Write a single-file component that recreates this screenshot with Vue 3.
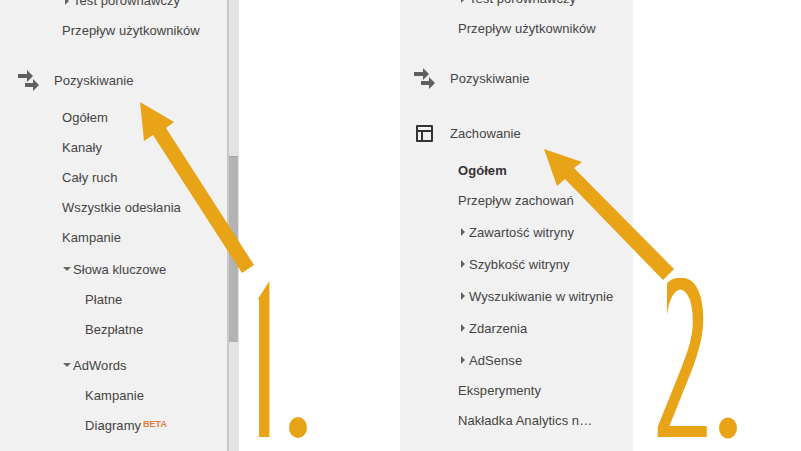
<script setup>
const leftRows = [
  { text: 'Test porównawczy', type: 'sub', open: false, cls: 'first' },
  { text: 'Przepływ użytkowników', type: 'item' },
  { text: 'Pozyskiwanie', type: 'head', icon: 'arrows', cls: 'gap-head' },
  { text: 'Ogółem', type: 'item', cls: 'gap-first' },
  { text: 'Kanały', type: 'item' },
  { text: 'Cały ruch', type: 'item' },
  { text: 'Wszystkie odesłania', type: 'item' },
  { text: 'Kampanie', type: 'item' },
  { text: 'Słowa kluczowe', type: 'sub', open: true, cls: 'gap-1' },
  { text: 'Płatne', type: 'leaf', cls: 'pull-1' },
  { text: 'Bezpłatne', type: 'leaf' },
  { text: 'AdWords', type: 'sub', open: true, cls: 'gap-5' },
  { text: 'Kampanie', type: 'leaf', cls: 'pull-1' },
  { text: 'Diagramy', type: 'leaf', beta: true }
]
const rightRows = [
  { text: 'Test porównawczy', type: 'sub', open: false, cls: 'first' },
  { text: 'Przepływ użytkowników', type: 'item' },
  { text: 'Pozyskiwanie', type: 'head', icon: 'arrows', cls: 'gap-head' },
  { text: 'Zachowanie', type: 'head', icon: 'layout', cls: 'gap-head2' },
  { text: 'Ogółem', type: 'item', cls: 'gap-first strong' },
  { text: 'Przepływ zachowań', type: 'item' },
  { text: 'Zawartość witryny', type: 'sub', open: false, cls: 'gap-1' },
  { text: 'Szybkość witryny', type: 'sub', open: false },
  { text: 'Wyszukiwanie w witrynie', type: 'sub', open: false },
  { text: 'Zdarzenia', type: 'sub', open: false },
  { text: 'AdSense', type: 'sub', open: false },
  { text: 'Eksperymenty', type: 'item', cls: 'pull-1' },
  { text: 'Nakładka Analytics n…', type: 'item' }
]
const panels = [
  { id: 'left', rows: leftRows },
  { id: 'right', rows: rightRows }
]
</script>

<template>
  <div class="page">
    <section v-for="panel in panels" :key="panel.id" class="panel" :class="panel.id">
      <nav class="nav">
        <div v-for="(row, i) in panel.rows" :key="i" class="row" :class="[row.type, row.cls]">
          <span v-if="row.icon" class="icon-slot">
            <svg v-if="row.icon === 'arrows'" width="21" height="21" viewBox="0 0 21 21">
              <path fill="#5f5f5f" d="M0 4h9V0l6 6-6 6V8H0zM7 13h8V9l6 6-6 6v-4H7z" />
            </svg>
            <svg v-else width="21" height="21" viewBox="0 0 21 21">
              <path fill="none" stroke="#333" stroke-width="2" stroke-linejoin="round" d="M3 3h15v15H3zM3 8h15M8 8v10" />
            </svg>
          </span>
          <span v-if="row.type === 'sub'" class="caret" :class="row.open ? 'down' : 'side'"></span>
          <span>{{ row.text }}</span>
          <sup v-if="row.beta" class="beta">BETA</sup>
        </div>
      </nav>
      <div v-if="panel.id === 'left'" class="scrollbar"><div class="thumb"></div></div>
    </section>

    <svg class="notes" width="801" height="451" viewBox="0 0 801 451">
      <g fill="#e8a317">
        <polygon points="140,102 174,122 166,128 254,265 242,273 153,135 144,141" />
        <polygon points="544,149 582,162 574,168 674,269 663,280 565,179 557,186" />
        <ellipse cx="298" cy="427.5" rx="9" ry="10.5" />
        <ellipse cx="728" cy="428" rx="9" ry="10.5" />
      </g>
    </svg>
    <div class="numeral-box one"><span class="numeral">1</span></div>
    <div class="numeral-box two"><span class="numeral">2</span></div>
  </div>
</template>

<style scoped>
.page {
  position: relative;
  display: flex;
  width: 801px;
  height: 451px;
  overflow: hidden;
  background: #fff;
  font-family: "Liberation Sans", Arial, sans-serif;
  font-size: 13px;
  letter-spacing: 0.06px;
  color: #444;
}
.panel {
  display: flex;
  height: 451px;
}
.panel.left { width: 239px; }
.panel.right { width: 233px; margin-left: 161px; }
.nav {
  flex: 1;
  background: #f1f1f1;
}
.row {
  display: flex;
  align-items: center;
  height: 30px;
  white-space: nowrap;
}
.item { padding-left: 58px; }
.left .item { padding-left: 62px; }
.head { padding-left: 14px; }
.left .head { padding-left: 18px; }
.icon-slot {
  display: flex;
  width: 36px;
  flex: none;
}
.sub { height: 32px; padding-left: 58px; }
.left .sub { padding-left: 62px; }
.leaf { padding-left: 85px; }
.first { height: 29px; margin-top: -14px; }
.right .first { margin-top: -16px; }
.gap-head { margin-top: 20px; }
.gap-head2 { margin-top: 25px; }
.gap-first { margin-top: 7px; }
.gap-1 { margin-top: 1px; }
.gap-5 { margin-top: 5px; }
.pull-1 { margin-top: -1px; }
.strong { font-weight: 700; color: #333; }
.caret {
  flex: none;
  width: 0;
  height: 0;
  border-style: solid;
}
.caret.side {
  margin-left: 3px;
  margin-right: 4px;
  border-width: 4px 0 4px 4px;
  border-color: transparent transparent transparent #666;
}
.caret.down {
  margin-left: 1px;
  margin-right: 2px;
  border-width: 4px 4px 0;
  border-color: #666 transparent transparent;
}
.beta {
  align-self: flex-start;
  margin: 9px 0 0 2px;
  font-size: 9px;
  font-weight: 700;
  letter-spacing: 0;
  line-height: 10px;
  color: #e8793a;
}
.scrollbar {
  flex: none;
  width: 12px;
  height: 451px;
  box-sizing: border-box;
  border-left: 2px solid #c9c9c9;
  background: #e3e3e3;
  padding-top: 156px;
}
.thumb {
  width: 9px;
  height: 186px;
  box-sizing: border-box;
  background: #b3b3b3;
  border-top: 1px solid #a3a3a3;
}
.notes {
  position: absolute;
  left: 0;
  top: 0;
  pointer-events: none;
}
.numeral-box {
  position: absolute;
  width: 70px;
  height: 180px;
}
.numeral-box.one {
  left: 250px;
  top: 270px;
  clip-path: polygon(8px 29px, 20px 10px, 20px 167px, 8px 167px);
}
.numeral-box.two {
  left: 640px;
  top: 270px;
  clip-path: polygon(27px 0, 70px 0, 70px 180px, 0 180px, 0 80px, 27px 80px);
}
.numeral {
  position: absolute;
  font-family: Roboto, sans-serif;
  font-size: 100px;
  font-weight: 300;
  line-height: 100px;
  letter-spacing: 0;
  color: #e8a317;
  text-shadow: 1.5px 0 #e8a317, 3px 0 #e8a317, 4.5px 0 #e8a317;
  transform-origin: 0 84px;
  transform: scaleY(2.2);
}
.one .numeral { left: -19px; top: 83px; }
.two .numeral { left: 11px; top: 83px; }
</style>
